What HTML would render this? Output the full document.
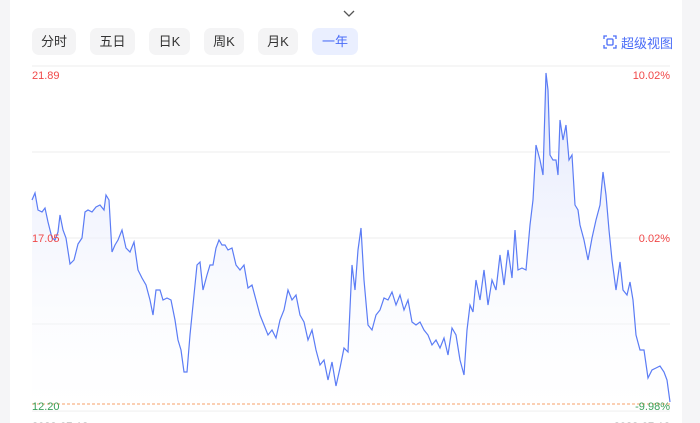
<!DOCTYPE html>
<html><head><meta charset="utf-8"><style>
html,body{margin:0;padding:0;width:700px;height:423px;overflow:hidden;background:#f5f5f7;font-family:"Liberation Sans","Noto Sans CJK SC",sans-serif}
.main{position:absolute;left:10px;top:0;width:672px;height:423px;background:#fff}
.tab{position:absolute;top:28px;height:27px;line-height:27px;border-radius:7px;background:#f4f4f5;color:#333;font-size:13px;text-align:center}
.tab.on{background:#eaefff;color:#4a6cf7}
</style></head><body>
<div class="main"></div>
<svg style="position:absolute;left:0;top:0" width="700" height="423">
<polyline points="344,11 349,16 354,11" fill="none" stroke="#555" stroke-width="1.3"/>
</svg>
<div class="tab" style="left:32px;width:44px">分时</div>
<div class="tab" style="left:90px;width:45px">五日</div>
<div class="tab" style="left:149px;width:41px">日K</div>
<div class="tab" style="left:204px;width:40px">周K</div>
<div class="tab" style="left:258px;width:40px">月K</div>
<div class="tab on" style="left:312px;width:46px">一年</div>
<div style="position:absolute;left:621px;top:33px;color:#4a6cf7;font-size:13px">超级视图</div>
<svg style="position:absolute;left:0;top:0" width="700" height="423">
<g stroke="#4a6cf7" stroke-width="1.3" fill="none">
<path d="M604,39V36H607M613,36H616V39M616,45V48H613M607,48H604V45"/>
<rect x="607" y="39" width="6" height="6" rx="1"/>
</g>
<defs><linearGradient id="g" x1="0" y1="0" x2="0" y2="1"><stop offset="0" stop-color="#dde3fb" stop-opacity="0.9"/><stop offset="1" stop-color="#fff" stop-opacity="0.2"/></linearGradient></defs>
<g stroke="#eee" stroke-width="1"><line x1="32" y1="66" x2="670" y2="66"/><line x1="32" y1="152" x2="670" y2="152"/><line x1="32" y1="238" x2="670" y2="238"/><line x1="32" y1="324" x2="670" y2="324"/><line x1="32" y1="411" x2="670" y2="411"/></g>
<polygon fill="url(#g)" points="32,411 32,200 35,193 38,210 42,212 45,208 48,222 52,238 55,240 58,232 60,215 63,230 66,238 70,264 74,260 78,244 82,238 85,212 88,210 92,212 96,207 100,205 104,210 106,195 109,200 112,252 115,245 118,240 122,230 126,248 130,252 134,242 138,270 142,278 146,285 150,300 153,315 156,290 160,290 163,300 167,298 171,300 175,320 178,340 181,350 184,372 187,372 190,335 194,295 197,265 200,262 203,290 207,275 210,265 213,265 216,248 219,240 222,245 225,245 228,250 232,248 236,265 240,270 244,265 248,288 252,285 256,300 260,315 264,325 268,335 272,330 276,338 280,320 284,310 288,290 292,300 296,295 300,315 304,322 308,340 312,330 316,350 320,365 324,360 328,380 332,362 336,386 340,368 344,348 348,352 352,265 355,290 358,250 361,228 364,280 368,325 372,330 376,315 380,310 384,298 388,300 392,292 396,305 400,295 404,310 408,300 412,322 416,325 420,322 424,330 428,335 432,345 436,340 440,348 444,338 448,355 452,328 456,335 460,360 464,375 467,330 470,305 473,312 476,280 480,300 484,270 488,305 492,280 496,290 500,255 504,285 508,250 512,278 515,230 518,270 522,268 526,270 530,225 533,200 536,145 540,160 543,175 546,73 548,90 550,155 553,160 556,160 558,175 560,120 563,140 566,125 569,160 572,155 575,205 578,210 580,225 584,240 588,260 592,238 596,220 600,205 603,172 606,195 609,230 612,260 616,290 620,262 623,290 627,295 630,282 633,300 636,335 640,350 644,350 648,378 652,370 656,368 660,366 664,372 667,380 670,402 670,411"/>
<polyline fill="none" stroke="#5b7cf5" stroke-width="1.2" points="32,200 35,193 38,210 42,212 45,208 48,222 52,238 55,240 58,232 60,215 63,230 66,238 70,264 74,260 78,244 82,238 85,212 88,210 92,212 96,207 100,205 104,210 106,195 109,200 112,252 115,245 118,240 122,230 126,248 130,252 134,242 138,270 142,278 146,285 150,300 153,315 156,290 160,290 163,300 167,298 171,300 175,320 178,340 181,350 184,372 187,372 190,335 194,295 197,265 200,262 203,290 207,275 210,265 213,265 216,248 219,240 222,245 225,245 228,250 232,248 236,265 240,270 244,265 248,288 252,285 256,300 260,315 264,325 268,335 272,330 276,338 280,320 284,310 288,290 292,300 296,295 300,315 304,322 308,340 312,330 316,350 320,365 324,360 328,380 332,362 336,386 340,368 344,348 348,352 352,265 355,290 358,250 361,228 364,280 368,325 372,330 376,315 380,310 384,298 388,300 392,292 396,305 400,295 404,310 408,300 412,322 416,325 420,322 424,330 428,335 432,345 436,340 440,348 444,338 448,355 452,328 456,335 460,360 464,375 467,330 470,305 473,312 476,280 480,300 484,270 488,305 492,280 496,290 500,255 504,285 508,250 512,278 515,230 518,270 522,268 526,270 530,225 533,200 536,145 540,160 543,175 546,73 548,90 550,155 553,160 556,160 558,175 560,120 563,140 566,125 569,160 572,155 575,205 578,210 580,225 584,240 588,260 592,238 596,220 600,205 603,172 606,195 609,230 612,260 616,290 620,262 623,290 627,295 630,282 633,300 636,335 640,350 644,350 648,378 652,370 656,368 660,366 664,372 667,380 670,402"/>
<line x1="32" y1="404" x2="670" y2="404" stroke="#f7a26a" stroke-width="1" stroke-dasharray="3,2"/>
<g font-family="Liberation Sans,sans-serif" font-size="11">
<text x="32" y="79" fill="#f04848">21.89</text>
<text x="670" y="79" fill="#f04848" text-anchor="end">10.02%</text>
<text x="32" y="242" fill="#f04848">17.05</text>
<text x="670" y="242" fill="#f04848" text-anchor="end">0.02%</text>
<text x="32" y="410" fill="#3aa05a">12.20</text>
<text x="670" y="410" fill="#3aa05a" text-anchor="end">-9.98%</text>
<text x="32" y="430" fill="#999">2022-07-12</text>
<text x="670" y="430" fill="#999" text-anchor="end">2023-07-12</text>
</g>
</svg>
</body></html>
